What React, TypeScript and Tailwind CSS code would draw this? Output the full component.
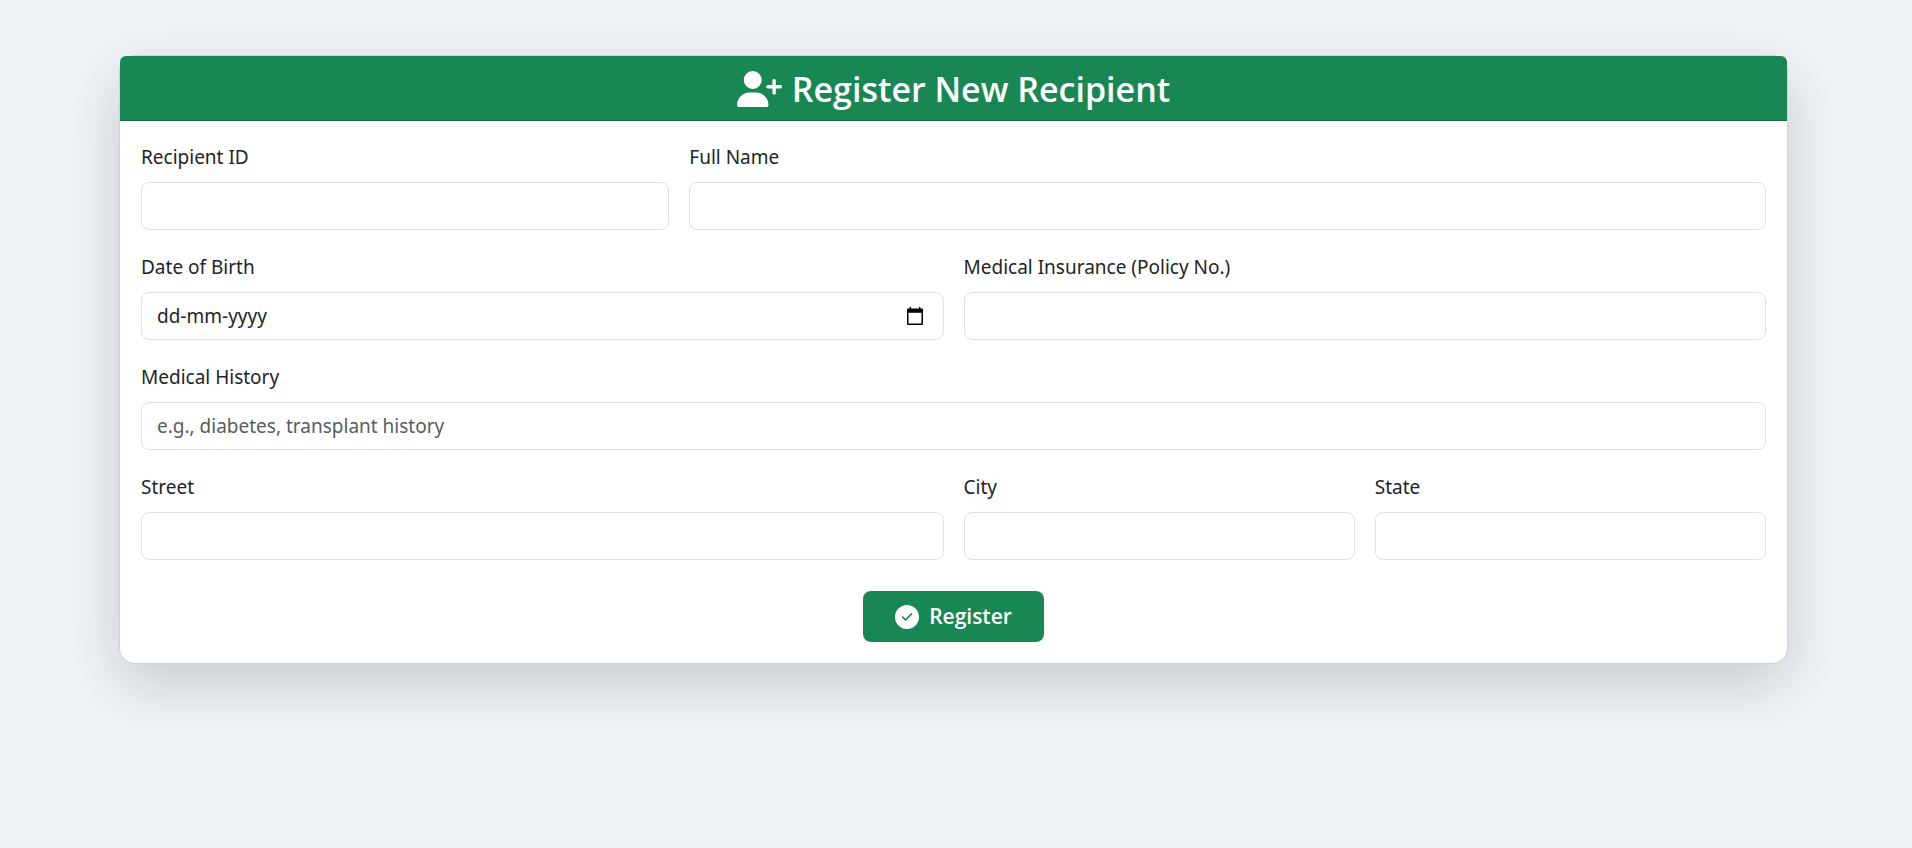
import { FaUserPlus } from "react-icons/fa6";

type FieldProps = {
  id: string;
  label: string;
  className: string;
  type?: string;
  placeholder?: string;
};

function Field({ id, label, className, type = "text", placeholder }: FieldProps) {
  return (
    <div className={className}>
      <label htmlFor={id} className="mb-[9px] block leading-8">
        {label}
      </label>
      <input
        id={id}
        name={id}
        type={type}
        placeholder={placeholder}
        className="block h-12 w-full rounded-lg border border-[#dee2e6] bg-white px-[15px] text-[#212529] outline-none placeholder:text-[#595c5f] focus:border-[#198754]"
      />
    </div>
  );
}

function DateField({ id, label, className }: FieldProps) {
  return (
    <div className={className}>
      <label htmlFor={id} className="mb-[9px] block leading-8">
        {label}
      </label>
      <div className="flex h-12 items-center rounded-lg border border-[#dee2e6] bg-white pr-5 pl-[15px]">
        <input
          id={id}
          name={id}
          type="text"
          placeholder="dd-mm-yyyy"
          className="min-w-0 flex-1 bg-transparent text-[#212529] outline-none placeholder:text-[#212529]"
        />
        <button type="button" aria-label="Open calendar">
          <svg viewBox="0 0 16 18" className="h-[18px] w-4" aria-hidden="true">
            <path
              fill="#000"
              fillRule="evenodd"
              d="M2.6 0H4v1.5h8V0h1.4v1.5H15a1 1 0 0 1 1 1V17a1 1 0 0 1-1 1H1a1 1 0 0 1-1-1V2.500a1 1 0 0 1 1-1h1.600ZM1.500 5.700v10.800h13V5.700Z"
            />
          </svg>
        </button>
      </div>
    </div>
  );
}

function CheckBadge() {
  return (
    <svg viewBox="0 0 24 24" className="size-6" aria-hidden="true">
      <circle cx="12" cy="12" r="12" fill="#fff" />
      <path
        d="m7.500 12 3 3 6-6.200"
        fill="none"
        stroke="#198754"
        strokeWidth="1.700"
        strokeLinecap="round"
        strokeLinejoin="round"
      />
    </svg>
  );
}

export default function App() {
  return (
    <main className="min-h-screen bg-[#f0f4f8] pt-[55px] pr-[124px] pb-12 pl-[119px] font-['Noto_Sans','Open_Sans',sans-serif] text-[19px] text-[#212529]">
      <section className="rounded-2xl border border-black/[0.175] bg-white shadow-[0_20px_60px_rgba(0,0,0,0.175)]">
        <header className="rounded-t-md border-b border-[#146c43] bg-[#198754] pt-[11px] pb-[9px] font-['Open_Sans','Noto_Sans',sans-serif] text-white">
          <h1 className="flex items-center justify-center gap-2.5 text-[34px] leading-[44px] font-semibold">
            <FaUserPlus className="h-9 w-[45px]" aria-hidden="true" />
            Register New Recipient
          </h1>
        </header>
        <form className="p-[21px] pt-5" onSubmit={(e) => e.preventDefault()}>
          <div className="grid grid-cols-12 gap-x-5 gap-y-[21px]">
            <Field id="recipient-id" label="Recipient ID" className="col-span-4" />
            <Field id="full-name" label="Full Name" className="col-span-8" />
            <DateField id="dob" label="Date of Birth" className="col-span-6" />
            <Field id="insurance" label="Medical Insurance (Policy No.)" className="col-span-6" />
            <Field
              id="history"
              label="Medical History"
              className="col-span-12"
              placeholder="e.g., diabetes, transplant history"
            />
            <Field id="street" label="Street" className="col-span-6" />
            <Field id="city" label="City" className="col-span-3" />
            <Field id="state" label="State" className="col-span-3" />
          </div>
          <div className="mt-[31px] flex justify-center">
            <button
              type="submit"
              className="flex h-[51px] items-center gap-2.5 rounded-lg bg-[#198754] px-8 font-['Open_Sans','Noto_Sans',sans-serif] text-[21px] font-semibold text-white"
            >
              <CheckBadge />
              Register
            </button>
          </div>
        </form>
      </section>
    </main>
  );
}
